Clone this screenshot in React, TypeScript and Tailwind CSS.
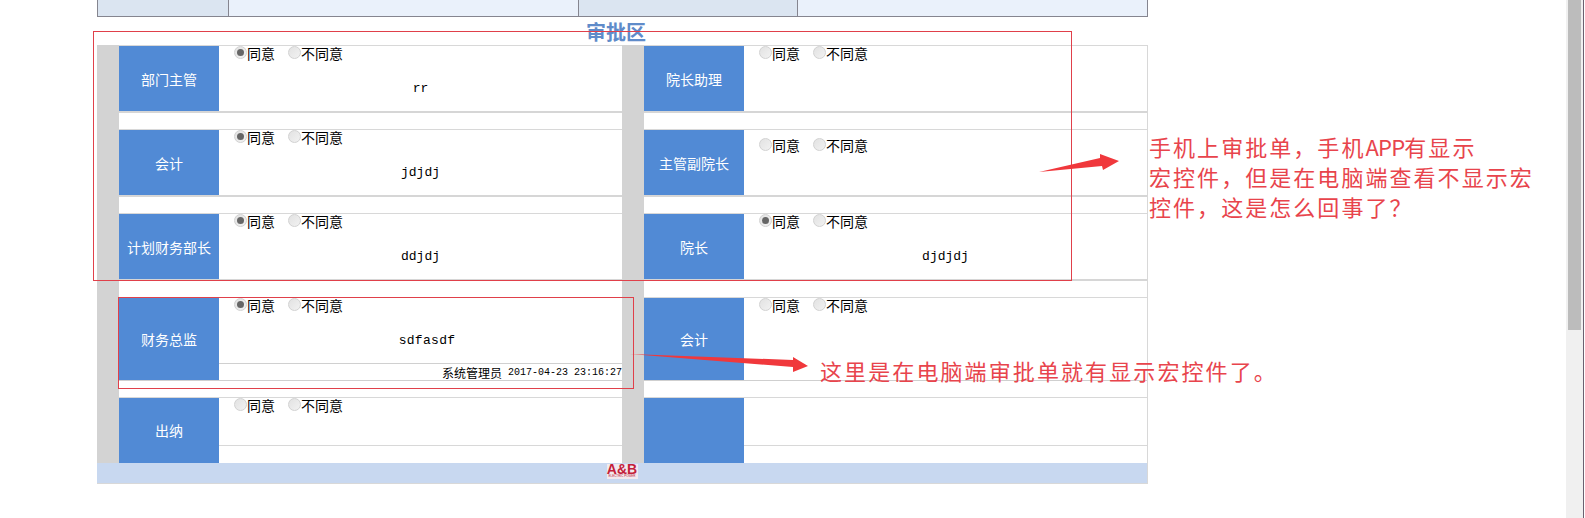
const cjk = "font-['Noto_Sans_CJK_SC','Liberation_Sans',sans-serif]";

type RowProps = {
  label?: string;
  picked?: boolean;
  value?: string;
  valueClass?: string;
  radioTop?: string;
  footer?: boolean;
  last?: boolean;
  tall?: boolean;
  noRadio?: boolean;
};

function Radio({ on }: { on?: boolean }) {
  return (
    <span className="flex h-[13px] w-[13px] -translate-y-[1px] items-center justify-center rounded-full border border-[#d2d2d2] bg-gradient-to-br from-[#e2e2e2] to-[#f2f2f2]">
      {on && <span className="h-[7px] w-[7px] rounded-full bg-[#666666]" />}
    </span>
  );
}

function Row({ label, picked, value, valueClass = '', radioTop = 'pt-0', footer, last, tall, noRadio }: RowProps) {
  return (
    <div className={last ? 'border-t border-[#d8d8d8]' : tall ? 'h-[100px] border-t border-[#d8d8d8]' : 'h-[84px] border-t border-[#d8d8d8]'}>
      <div className={tall ? 'flex h-[83px] border-b border-[#cfcfcf]' : last ? 'flex h-[65px]' : 'flex h-[67px] border-b-2 border-[#d6d6d6]'}>
        <div className={'flex w-[100px] shrink-0 items-center justify-center bg-[#518ad5] text-[14px] text-white ' + (tall || last ? 'pt-0' : 'pt-[2px]')}>{label}</div>
        <div className="flex min-w-0 flex-1 flex-col">
          {!noRadio && (
            <div className={'-mt-px flex items-center pl-[15px] text-[14px] leading-[17px] text-black ' + radioTop}>
              <Radio on={picked} />
              <span>同意</span>
              <span className="ml-[13px]"><Radio /></span>
              <span>不同意</span>
            </div>
          )}
          {value && (
            <div className={"mt-[18px] text-center font-['Liberation_Mono',monospace] text-[13px] leading-[17px] text-black " + valueClass}>{value}</div>
          )}
          {footer && (
            <div className="mt-auto flex h-[17px] items-center justify-end border-t border-[#d0d0d0] pt-[2px] text-[12px] leading-[16px] text-black">
              系统管理员
              <span className="ml-[6px] font-['Liberation_Mono',monospace] text-[10px]">2017-04-23 23:16:27</span>
            </div>
          )}
          {last && <div className="mt-auto h-[18px] border-t border-[#d8d8d8]" />}
        </div>
      </div>
    </div>
  );
}

function Column({ children }: { children: React.ReactNode }) {
  return (
    <div className="flex flex-1">
      <div className="w-[22px] shrink-0 bg-[#d3d3d3]" />
      <div className="min-w-0 flex-1">{children}</div>
    </div>
  );
}

export default function App() {
  return (
    <div className={'relative flex h-[518px] w-full overflow-hidden bg-white ' + cjk}>
      <main className="min-w-0 flex-1 pl-[97px]">
        <div className="w-[1051px]">
          {/* top table, cut off by the screenshot */}
          <div className="flex h-[17px] border-x border-b border-[#85858f]">
            <div className="w-[131px] border-r border-[#85858f] bg-[#dbe5f1]" />
            <div className="w-[350px] border-r border-[#85858f] bg-[#eaf1fb]" />
            <div className="w-[219px] border-r border-[#85858f] bg-[#dbe5f1]" />
            <div className="flex-1 bg-[#eaf1fb]" />
          </div>

          <div className="flex h-[28px] items-center justify-center pt-[2px] pr-[13px] text-[20px] leading-[28px] font-bold text-[#5f8bc9]">审批区</div>

          <div className="border-r border-b border-[#d8d8d8]">
            <div className="flex">
              <Column>
                <Row label="部门主管" picked value="rr" />
                <Row label="会计" picked value="jdjdj" />
                <Row label="计划财务部长" picked value="ddjdj" />
                <Row label="财务总监" picked value="sdfasdf" valueClass="pl-[13px] tracking-[0.3px]" footer tall />
                <Row label="出纳" last />
              </Column>
              <Column>
                <Row label="院长助理" />
                <Row label="主管副院长" radioTop="pt-[8px]" />
                <Row label="院长" picked value="djdjdj" />
                <Row label="会计" tall />
                <Row last noRadio />
              </Column>
            </div>
            <div className="flex h-[20px] justify-center bg-[#c8d8f0] pt-px">
              <div className="flex h-[15px] w-[31px] flex-col items-center bg-[#f1e9ee] font-['Liberation_Sans',sans-serif] font-bold text-[#c3203a]">
                <span className="text-[14px] leading-[11px]">A&amp;B</span>
                <span className="text-[3px] leading-[3px] font-normal">ELECTRIC POWER</span>
              </div>
            </div>
          </div>
        </div>
      </main>

      {/* scrollbar */}
      <div className="flex w-[19px] shrink-0">
        <div className="w-[17px] bg-[#f0f0f0] px-[2px]">
          <div className="h-[330px] bg-[#bcbcbc]" />
        </div>
        <div className="w-px bg-[#6b6070]" />
        <div className="w-px bg-white" />
      </div>

      {/* annotations drawn on top of the screenshot */}
      <div className="absolute top-[31px] left-[93px] h-[250px] w-[979px] border border-[#e0404a]" />
      <div className="absolute top-[297px] left-[118px] h-[92px] w-[516px] border border-[#e0404a]" />

      <svg className="absolute top-0 left-0" width="1585" height="518">
        <polygon points="1039,172 1100,158 1100,154 1119,161 1103,170 1102,166" fill="#f0383c" />
        <polygon points="630,354 793,360 793,357 808,366 793,372 793,367" fill="#f0383c" />
      </svg>

      <div className="absolute top-[131px] left-[1149px] text-[22px] leading-[30px] tracking-[2.05px] whitespace-nowrap text-[#e8444c]">
        <div>手机上审批单，手机<span className="tracking-[-0.8px]">APP</span>有显示</div>
        <div>宏控件，但是在电脑端查看不显示宏</div>
        <div>控件，这是怎么回事了？</div>
      </div>
      <div className="absolute top-[355px] left-[820px] text-[22px] leading-[30px] tracking-[2.1px] whitespace-nowrap text-[#e8444c]">
        这里是在电脑端审批单就有显示宏控件了。
      </div>
    </div>
  );
}
